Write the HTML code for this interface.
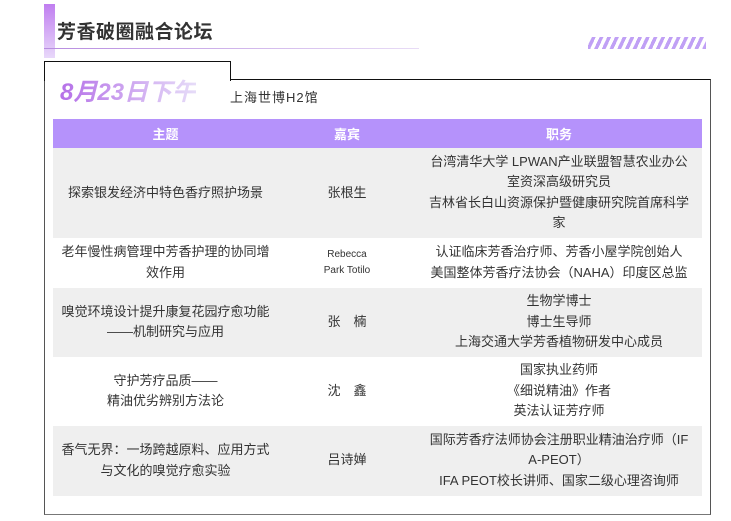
<!DOCTYPE html>
<html><head><meta charset="utf-8"><style>
*{margin:0;padding:0;box-sizing:border-box}
body{width:731px;height:521px;background:#fff;font-family:"Liberation Sans","Noto Sans CJK SC",sans-serif;position:relative;overflow:hidden;color:#333}
.sq{position:absolute;left:44px;top:4px;width:11px;height:54px;background:linear-gradient(180deg,#c07ef0,#e8d8fa)}
.title{position:absolute;left:57px;top:17px;font-size:19px;font-weight:bold;color:#333;letter-spacing:0.5px}
.hl{position:absolute;left:44px;top:48px;width:375px;height:1px;background:linear-gradient(90deg,#b78ce0,#e8dcf6)}
.stripes{position:absolute;left:588px;top:37px;width:118px;height:12px;background:repeating-linear-gradient(-65deg,#c0a0f5 0 3.5px,transparent 3.5px 7px)}
.tab{position:absolute;left:44px;top:61px;width:187px;height:20px;border:1.5px solid #111;border-bottom:none;background:#fff}
.box{position:absolute;left:44px;top:79px;width:667px;height:436px;border:1.5px solid #111;border-bottom-color:#777;border-left-color:#555;border-right-color:#555}
.cover{position:absolute;left:45.5px;top:78px;width:184px;height:4px;background:#fff}
.date{position:absolute;left:60px;top:72px;font-size:24px;font-weight:bold;font-style:italic;background:linear-gradient(90deg,#b570e8,#e6dcf8);-webkit-background-clip:text;color:transparent}
.loc{position:absolute;left:230px;top:87px;font-size:13px;color:#333;letter-spacing:1px}
table{position:absolute;left:53px;top:119px;width:649px;border-collapse:collapse;font-size:13px;text-align:center}
th{background:#b592fb;color:#fff;font-weight:bold;height:29px;font-size:13px}
td{line-height:20.5px;border-bottom:1px solid #fff}
tr.g td{background:#efefef}
</style></head><body>
<div class="sq"></div>
<div class="title">芳香破圈融合论坛</div>
<div class="hl"></div>
<div class="stripes"></div>
<div class="box"></div>
<div class="tab"></div>
<div class="cover"></div>
<div class="date">8月23日下午</div>
<div class="loc">上海世博H2馆</div>
<table>
<tr><th style="width:225px">主题</th><th style="width:138px">嘉宾</th><th>职务</th></tr>
<tr class="g" style="height:90px"><td>探索银发经济中特色香疗照护场景</td><td>张根生</td><td>台湾清华大学 LPWAN产业联盟智慧农业办公<br>室资深高级研究员<br>吉林省长白山资源保护暨健康研究院首席科学<br>家</td></tr>
<tr style="height:49px"><td>老年慢性病管理中芳香护理的协同增<br>效作用</td><td style="font-size:10px;line-height:16px">Rebecca<br>Park Totilo</td><td>认证临床芳香治疗师、芳香小屋学院创始人<br>美国整体芳香疗法协会（NAHA）印度区总监</td></tr>
<tr class="g" style="height:70px"><td>嗅觉环境设计提升康复花园疗愈功能<br>——机制研究与应用</td><td>张　楠</td><td>生物学博士<br>博士生导师<br>上海交通大学芳香植物研发中心成员</td></tr>
<tr style="height:68px"><td>守护芳疗品质——<br>精油优劣辨别方法论</td><td>沈　鑫</td><td>国家执业药师<br>《细说精油》作者<br>英法认证芳疗师</td></tr>
<tr class="g" style="height:71px"><td>香气无界：一场跨越原料、应用方式<br>与文化的嗅觉疗愈实验</td><td>吕诗婵</td><td>国际芳香疗法师协会注册职业精油治疗师（IF<br>A-PEOT）<br>IFA PEOT校长讲师、国家二级心理咨询师</td></tr>
</table>
</body></html>
